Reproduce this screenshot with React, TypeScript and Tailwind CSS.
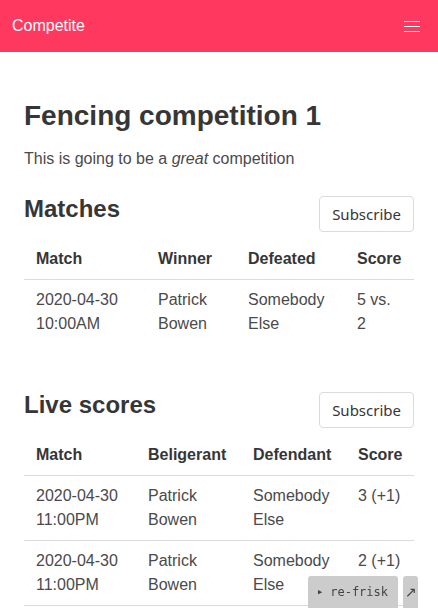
import React from "react";

const Sub = () => (
  <button className="h-9 px-[12px] border border-[#dbdbdb] rounded-[4px] bg-white text-[#363636] text-[15px] leading-none shrink-0" style={{ fontFamily: '"Noto Sans", sans-serif' }}>
    Subscribe
  </button>
);

type Row = string[][];

function Table({ heads, widths, rows, lastBorder }: { heads: string[]; widths: string[]; rows: Row[]; lastBorder?: boolean }) {
  return (
    <table className="w-full border-collapse table-fixed text-[16px] leading-6 mt-[7px]">
      <colgroup>
        {widths.map((w, i) => (
          <col key={i} className={w} />
        ))}
      </colgroup>
      <thead>
        <tr>
          {heads.map((h) => (
            <th key={h} className="text-left font-bold text-[#363636] px-3 py-2 border-b border-[#dbdbdb]">
              {h}
            </th>
          ))}
        </tr>
      </thead>
      <tbody>
        {rows.map((r, i) => (
          <tr key={i} className={i < rows.length - 1 || lastBorder ? "border-b border-[#dbdbdb]" : ""}>
            {r.map((c, j) => (
              <td key={j} className="align-top px-3 py-2 text-[#4a4a4a]">
                {c.map((l, k) => (
                  <div key={k}>{l}</div>
                ))}
              </td>
            ))}
          </tr>
        ))}
      </tbody>
    </table>
  );
}

export default function App() {
  return (
    <div className="relative min-h-[608px] bg-white" style={{ fontFamily: '"Liberation Sans", Arial, sans-serif' }}>
      <nav className="h-[52px] bg-[#ff3860] flex items-center justify-between pl-3 pr-[18px]">
        <span className="text-white text-[16px]">Competite</span>
        <div className="flex flex-col gap-[4px] w-4">
          <div className="h-px bg-white" />
          <div className="h-px bg-white" />
          <div className="h-px bg-white" />
        </div>
      </nav>
      <main className="px-6 pt-[48px]">
        <h1 className="text-[28px] font-bold leading-[32px] text-[#363636]">Fencing competition 1</h1>
        <p className="text-[16px] leading-6 text-[#4a4a4a] mt-[15px]">
          This is going to be a <em>great</em> competition
        </p>
        <div className="flex justify-between items-start mt-[25px]">
          <h2 className="text-[24px] font-bold leading-[25px] text-[#363636]">Matches</h2>
          <Sub />
        </div>
        <Table
          heads={["Match", "Winner", "Defeated", "Score"]}
          widths={["w-[122px]", "w-[90px]", "w-[109px]", "w-[69px]"]}
          rows={[[["2020-04-30", "10:00AM"], ["Patrick", "Bowen"], ["Somebody", "Else"], ["5 vs.", "2"]]]}
        />
        <div className="flex justify-between items-start mt-[48px]">
          <h2 className="text-[24px] font-bold leading-[25px] text-[#363636]">Live scores</h2>
          <Sub />
        </div>
        <Table
          heads={["Match", "Beligerant", "Defendant", "Score"]}
          widths={["w-[112px]", "w-[105px]", "w-[105px]", "w-[68px]"]}
          lastBorder
          rows={[
            [["2020-04-30", "11:00PM"], ["Patrick", "Bowen"], ["Somebody", "Else"], ["3 (+1)"]],
            [["2020-04-30", "11:00PM"], ["Patrick", "Bowen"], ["Somebody", "Else"], ["2 (+1)"]],
          ]}
        />
      </main>
      <div className="fixed bottom-0 right-[20px] flex gap-[5px] items-end">
        <div className="h-[32px] w-[90px] bg-[#cccccc] rounded-t-[3px] flex items-center justify-center gap-[8px] text-[#444] text-[12px]" style={{ fontFamily: '"DejaVu Sans Mono", monospace' }}>
          <span className="text-[7px]">▶</span>
          <span>re-frisk</span>
        </div>
        <div className="h-[32px] w-[15px] bg-[#cccccc] rounded-t-[3px] flex items-center justify-center text-[#444] text-[14px]">↗</div>
      </div>
    </div>
  );
}
